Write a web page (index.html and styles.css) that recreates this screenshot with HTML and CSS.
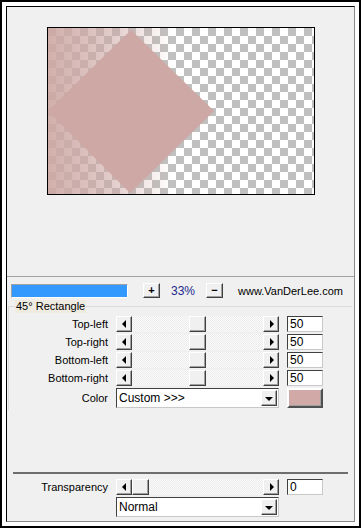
FILE: index.html
```html
<!DOCTYPE html>
<html lang="en">
<head>
    <meta charset="UTF-8">
    <title>45° Rectangle</title>
    <link rel="stylesheet" href="styles.css">
</head>
<body>
    <div class="frame">
        <div class="panel">
            <div class="preview">
                <div class="canvas">
                    <svg width="266" height="166" viewBox="0 0 266 166">
                        <defs>
                            <pattern id="checker" width="16" height="16" patternUnits="userSpaceOnUse">
                                <rect width="16" height="16" fill="#fff"/>
                                <rect width="8" height="8" fill="#c0c0c0"/>
                                <rect x="8" y="8" width="8" height="8" fill="#c0c0c0"/>
                            </pattern>
                            <linearGradient id="fade" x1="0" y1="0" x2="1" y2="0">
                                <stop offset="0" stop-color="#cda8a4" stop-opacity="0.92"/>
                                <stop offset="0.5" stop-color="#cda8a4" stop-opacity="0.6"/>
                                <stop offset="1" stop-color="#cda8a4" stop-opacity="0"/>
                            </linearGradient>
                        </defs>
                        <rect width="266" height="166" fill="url(#checker)"/>
                        <rect width="124" height="166" fill="url(#fade)"/>
                        <polygon points="83,2 166,83 82,165 0,83" fill="#cda8a4"/>
                    </svg>
                </div>
            </div>

            <div class="zoom-row">
                <div class="progress"><div class="progress-fill"></div></div>
                <span class="btn">+</span>
                <span class="pct">33%</span>
                <span class="btn">&minus;</span>
                <span class="site">www.VanDerLee.com</span>
            </div>

            <div class="group">
                <div class="legend">45° Rectangle</div>
                <div class="row">
                    <span class="lbl">Top-left</span>
                    <div class="scroll"><span class="arr arr-l"></span><div class="track"><span class="thumb" style="margin-left:57px"></span></div><span class="arr arr-r"></span></div>
                    <span class="edit">50</span>
                </div>
                <div class="row">
                    <span class="lbl">Top-right</span>
                    <div class="scroll"><span class="arr arr-l"></span><div class="track"><span class="thumb" style="margin-left:57px"></span></div><span class="arr arr-r"></span></div>
                    <span class="edit">50</span>
                </div>
                <div class="row">
                    <span class="lbl">Bottom-left</span>
                    <div class="scroll"><span class="arr arr-l"></span><div class="track"><span class="thumb" style="margin-left:57px"></span></div><span class="arr arr-r"></span></div>
                    <span class="edit">50</span>
                </div>
                <div class="row">
                    <span class="lbl">Bottom-right</span>
                    <div class="scroll"><span class="arr arr-l"></span><div class="track"><span class="thumb" style="margin-left:57px"></span></div><span class="arr arr-r"></span></div>
                    <span class="edit">50</span>
                </div>
                <div class="row row-tall">
                    <span class="lbl">Color</span>
                    <div class="combo"><span class="combo-text">Custom &gt;&gt;&gt;</span><span class="combo-btn"></span></div>
                    <span class="swatch"></span>
                </div>
            </div>

            <div class="sep"></div>

            <div class="row row-bottom">
                <span class="lbl">Transparency</span>
                <div class="scroll"><span class="arr arr-l"></span><div class="track"><span class="thumb" style="margin-left:0px"></span></div><span class="arr arr-r"></span></div>
                <span class="edit">0</span>
            </div>
            <div class="row row-tall row-bottom">
                <span class="lbl"></span>
                <div class="combo"><span class="combo-text">Normal</span><span class="combo-btn"></span></div>
            </div>
        </div>
    </div>
</body>
</html>
```

FILE: styles.css
```css
* {
    margin: 0;
    padding: 0;
    box-sizing: border-box;
}
body {
    background: #fff;
    font-family: "Liberation Sans", Arial, sans-serif;
    font-size: 11px;
    color: #000;
}
.frame {
    width: 361px;
    height: 528px;
    border: 2px solid #000;
    padding: 4px;
    background: #fff;
}
.panel {
    height: 100%;
    background: #f0f0f0;
    border: 1px solid;
    border-color: #000 #8a8a8a #8a8a8a #000;
    display: flex;
    flex-direction: column;
}

/* preview */
.preview {
    height: 270px;
    flex-shrink: 0;
    padding-top: 20px;
    border-bottom: 1px solid #a0a0a0;
    display: flex;
    justify-content: center;
    align-items: flex-start;
}
.canvas {
    width: 268px;
    height: 168px;
    border: 1px solid #000;
    display: flex;
}

/* zoom row */
.zoom-row {
    display: flex;
    align-items: center;
    height: 15px;
    margin-top: 6px;
    padding-left: 4px;
}
.progress {
    width: 117px;
    height: 14px;
    border: 1px solid;
    border-color: #a0a0a0 #fff #fff #a0a0a0;
    display: flex;
}
.progress-fill {
    flex: 1;
    background: #3399ff;
}
.btn {
    width: 17px;
    height: 15px;
    margin-left: 15px;
    border: 1px solid;
    border-color: #fff #404040 #404040 #fff;
    box-shadow: inset -1px -1px 0 #a0a0a0;
    display: flex;
    align-items: center;
    justify-content: center;
    font-weight: bold;
    font-size: 11px;
    line-height: 1;
}
.pct + .btn {
    margin-left: 0;
}
.pct {
    width: 46px;
    text-align: center;
    color: #1b2a8c;
    font-size: 12px;
}
.site {
    margin-left: 15px;
    font-size: 11px;
}

/* group box */
.group {
    margin: 8px 2px 0 1px;
    border-top: 1px solid #dadada;
    border-left: 1px solid #dadada;
}
.legend {
    width: max-content;
    margin: -7px 0 0 6px;
    padding: 0 1px;
    height: 13px;
    line-height: 13px;
    font-size: 11px;
    background: #efebe0;
}
.group .legend + .row {
    margin-top: 3px;
}

/* rows */
.row {
    display: flex;
    align-items: center;
    height: 16px;
    margin-bottom: 2px;
}
.row-tall {
    height: 20px;
}
.lbl {
    width: 107px;
    padding-right: 8px;
    text-align: right;
    font-size: 11px;
    white-space: nowrap;
}
.row-bottom {
    padding-left: 2px;
}
.scroll {
    width: 163px;
    height: 16px;
    display: flex;
}
.arr {
    width: 16px;
    height: 16px;
    background: #f0f0f0;
    border: 1px solid;
    border-color: #fff #404040 #404040 #fff;
    box-shadow: inset -1px -1px 0 #a0a0a0;
    display: flex;
    align-items: center;
    justify-content: center;
}
.arr::before {
    content: "";
    border-top: 4px solid transparent;
    border-bottom: 4px solid transparent;
}
.arr-l::before {
    border-right: 4px solid #000;
    margin-left: -1px;
}
.arr-r::before {
    border-left: 4px solid #000;
    margin-left: 1px;
}
.track {
    flex: 1;
    display: flex;
    background: repeating-conic-gradient(#fcfcfc 0 25%, #ebebeb 0 50%) 0 0 / 2px 2px;
}
.thumb {
    width: 17px;
    height: 16px;
    background: #f0f0f0;
    border: 1px solid;
    border-color: #fff #404040 #404040 #fff;
    box-shadow: inset -1px -1px 0 #a0a0a0;
}
.edit {
    width: 36px;
    height: 16px;
    margin-left: 8px;
    background: #fff;
    border: 1px solid;
    border-color: #404040 #c8c8c8 #c8c8c8 #404040;
    padding-left: 2px;
    font-size: 12px;
    line-height: 14px;
}

/* combo */
.combo {
    width: 163px;
    height: 20px;
    background: #fff;
    border: 1px solid;
    border-color: #404040 #c8c8c8 #c8c8c8 #404040;
    display: flex;
    align-items: center;
    padding: 1px;
}
.combo-text {
    flex: 1;
    padding-left: 1px;
    font-size: 12px;
}
.combo-btn {
    width: 16px;
    height: 16px;
    background: #f0f0f0;
    border: 1px solid;
    border-color: #fff #404040 #404040 #fff;
    box-shadow: inset -1px -1px 0 #a0a0a0;
    display: flex;
    align-items: center;
    justify-content: center;
}
.combo-btn::before {
    content: "";
    border-left: 4px solid transparent;
    border-right: 4px solid transparent;
    border-top: 4px solid #000;
    margin-top: 1px;
}
.swatch {
    width: 36px;
    height: 20px;
    margin-left: 8px;
    background: #d1a9a6;
    border: 2px solid;
    border-color: #fff #505050 #505050 #fff;
    box-shadow: inset -1px -1px 0 #a0a0a0;
}

/* bottom */
.sep {
    height: 2px;
    margin: 62px 6px 5px;
    background: #6e6e6e;
}
```
